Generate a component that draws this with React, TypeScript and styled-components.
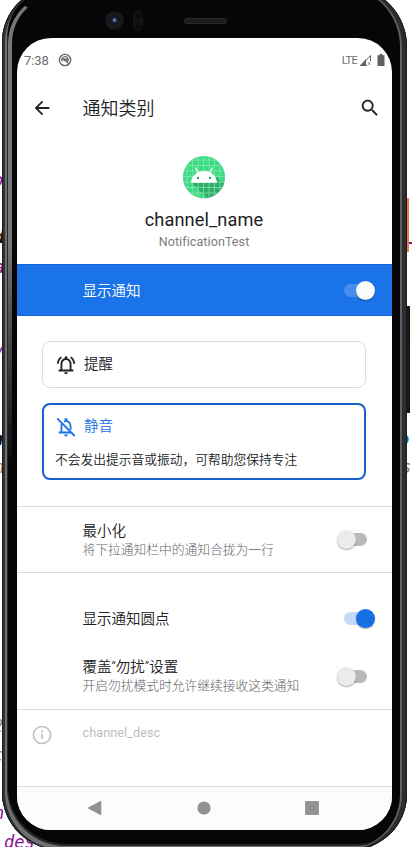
import React from 'react';
import styled, { createGlobalStyle, css } from 'styled-components';

const GlobalStyle = createGlobalStyle`
  * { box-sizing: border-box; }
  body { margin: 0; background: #fff; overflow: hidden; }
`;

const Desktop = styled.div`
  position: relative;
  width: 412px;
  height: 847px;
  overflow: hidden;
  background: #fff;
  font-family: Roboto, 'Noto Sans CJK SC', sans-serif;
`;

const CodeScrap = styled.span<{ $x: number; $y: number; $color: string; $bold?: boolean }>`
  position: absolute;
  left: ${p => p.$x}px;
  top: ${p => p.$y}px;
  color: ${p => p.$color};
  font: italic ${p => (p.$bold ? 700 : 400)} 17px/20px 'DejaVu Sans Mono', monospace;
  white-space: pre;
`;

const EdgeMark = styled.div<{ $x: number; $y: number; $w: number; $h: number; $color: string }>`
  position: absolute;
  left: ${p => p.$x}px;
  top: ${p => p.$y}px;
  width: ${p => p.$w}px;
  height: ${p => p.$h}px;
  background: ${p => p.$color};
`;

const Phone = styled.div`
  position: relative;
  width: 405px;
  height: 863px;
  margin: -13px 0 0 2px;
  padding: 0 15px;
  border-radius: 55px 58px 56px 58px / 55px 60px 56px 58px;
  overflow: hidden;
  background: #060608;
  box-shadow:
    inset 0 0 0 1px #1d1e20,
    inset -5px 0 0 0 #2c2d2e,
    inset 3px 0 0 0 #313335,
    inset -7px 0 0 0 #5e5f60,
    inset 5px -4px 0 0 #6d6f71,
    inset 6px -6px 0 0 #262729;

  &::after {
    content: '';
    position: absolute;
    inset: 6px 7px 0 6px;
    border-left: 4px solid #767777;
    border-top: 3px solid transparent;
    border-radius: 50px 0 0 0;
    mask-image: linear-gradient(#000 0 250px, transparent 480px);
  }
`;

const Bezel = styled.div`
  display: grid;
  grid-template-columns: 86px 22px 26px 33px 1fr;
  align-items: center;
  height: 51px;
  padding-top: 16px;
`;

const Speaker = styled.div`
  width: 43px;
  height: 6px;
  border: 1px solid #29292b;
  border-radius: 3px;
  background: #1d1d1e;
`;

const Lens = styled.div`
  justify-self: center;
  width: 19px;
  height: 19px;
  border-radius: 50%;
  background: radial-gradient(circle at 50% 48%, #7c84a8 0 0.8px, #222c4c 2px, #10131e 4px, #1b1b1d 6px, #161618 9px);
`;

const Sensor = styled.div`
  justify-self: center;
  width: 10px;
  height: 20px;
  border-radius: 5px;
  background: radial-gradient(circle at 5px 5px, #0c0c0e 3px, transparent 4px),
    radial-gradient(circle at 5px 15px, #0c0c0e 3px, transparent 4px), #131315;
`;

const Screen = styled.main`
  display: flex;
  flex-direction: column;
  height: 792px;
  border-radius: 34px;
  overflow: hidden;
  background: #fff;
  color: #202124;
`;

const StatusBar = styled.div`
  display: flex;
  align-items: center;
  gap: 9.5px;
  height: 44px;
  padding: 0 6px 0 7px;
  color: #6b6c6e;
  font-size: 13px;
  letter-spacing: -0.1px;
`;

const StatusIcons = styled.div`
  display: flex;
  align-items: center;
  gap: 2px;
  margin-left: auto;
  font-size: 11px;
  letter-spacing: -0.7px;
`;

const AppBar = styled.header`
  display: grid;
  grid-template-columns: 50px 15.5px 1fr 24px;
  align-items: center;
  height: 52px;
  padding: 0 10px 0 0;
`;

const BarIcon = styled.svg`
  display: block;
  justify-self: center;
`;

const Title = styled.h1`
  margin: 0;
  padding-top: 2px;
  grid-column: 3;
  font-size: 18px;
  font-weight: 350;
  line-height: 26px;
`;

const Identity = styled.section`
  display: flex;
  flex-direction: column;
  align-items: center;
  height: 130px;
  padding: 21px 1px 0 0;
`;

const ChannelName = styled.div`
  margin-top: 10px;
  font-size: 18.2px;
  line-height: 22px;
  letter-spacing: 0.1px;
`;

const AppName = styled.div`
  margin-top: 2px;
  font-size: 12.5px;
  line-height: 18px;
  letter-spacing: 0.1px;
  color: #7c7c7c;
`;

const MasterSwitch = styled.section`
  display: flex;
  align-items: center;
  justify-content: space-between;
  height: 52px;
  padding: 0 18px 0 65.5px;
  border: solid #1765cf;
  border-width: 1px 0;
  background: #1a73e8;
  color: #fff;
`;

const Track = styled.div<{ $on: boolean; $inverse?: boolean }>`
  position: relative;
  flex: none;
  width: 28px;
  height: 13px;
  margin-right: ${p => (p.$on ? 2 : 7)}px;
  border-radius: 7px;
  background: ${p => (p.$inverse ? '#488fed' : p.$on ? '#c2d9f9' : '#b9b9b9')};

  &::after {
    content: '';
    position: absolute;
    top: -3px;
    ${p => (p.$on ? 'right: -2.5px;' : 'left: -2.5px;')}
    width: 19px;
    height: 19px;
    border-radius: 50%;
    background: ${p => (p.$inverse ? '#fafafa' : p.$on ? '#1570e3' : '#ebebeb')};
    box-shadow: 0 1px 1.5px rgba(0, 0, 0, 0.35);
  }
`;

const Choices = styled.section`
  display: flex;
  flex-direction: column;
  gap: 15px;
  height: 190px;
  padding: 25px 26px 0 25px;
`;

const Choice = styled.div<{ $selected?: boolean }>`
  height: ${p => (p.$selected ? 77 : 47)}px;
  padding: ${p => (p.$selected ? '10px 11px 0' : '11px 12px 0')};
  border: ${p => (p.$selected ? '2px solid #1760cb' : '1px solid #dadce0')};
  border-radius: 8px;
`;

const ChoiceHead = styled.div<{ $selected?: boolean }>`
  display: flex;
  align-items: center;
  gap: 7px;
  height: 23px;
  font-size: 14.5px;
  font-weight: 350;
  line-height: 20px;
  color: ${p => (p.$selected ? '#1a73e8' : '#202124')};
`;

const ChoiceText = styled.div`
  margin-top: 12px;
  font-size: 12.75px;
  font-weight: 350;
  line-height: 19px;
  white-space: nowrap;
`;

const Setting = styled.section<{ $h: number; $top?: number; $bottom?: number }>`
  display: flex;
  align-items: center;
  justify-content: space-between;
  height: ${p => p.$h}px;
  padding: ${p => p.$top ?? 0}px 18px ${p => p.$bottom ?? 0}px 65.5px;

  ${p => p.$top !== undefined && css`border-top: 1px solid #dadada;`}
`;

const SettingTitle = styled.div`
  padding-top: 2px;
  font-size: 14.5px;
  font-weight: 350;
  line-height: 18px;
`;

const SettingText = styled.div`
  font-size: 12.75px;
  font-weight: 300;
  line-height: 18px;
  color: #5f6368;
  white-space: nowrap;
`;

const MasterLabel = styled(SettingTitle)`
  padding-top: 3px;
`;

const Description = styled.section`
  display: grid;
  grid-template-columns: 65.5px 1fr;
  align-items: start;
  flex: 1;
  padding-top: 14px;
  border-top: 1px solid #dadada;
  color: #bdbdbd;
  font-size: 12.6px;
  line-height: 18px;
  letter-spacing: 0.1px;
`;

const InfoIcon = styled.svg`
  margin: 0.5px 0 0 15px;
`;

const NavBar = styled.nav`
  display: grid;
  grid-template-columns: repeat(3, 108px);
  justify-content: center;
  justify-items: center;
  align-items: center;
  height: 44px;
  padding: 0 1px 1px 0;
  border-top: 1px solid #dcdcdc;
  background: #fcfcfc;
`;

function AndroidLogo() {
  const lines = [4, 9.5, 15, 20.5, 26, 31.5, 37];
  return (
    <svg width="44" height="44" viewBox="0 0 44 44">
      <defs>
        <clipPath id="disc"><circle cx="22" cy="22" r="21" /></clipPath>
      </defs>
      <circle cx="22" cy="22.6" r="21" fill="#b7c8be" />
      <g clipPath="url(#disc)">
        <rect width="44" height="44" fill="#3ddc84" />
        <path d="M9 27 30 48 48 44V34L35 22Z" fill="#2fae69" />
        <g stroke="#8beab5" strokeWidth=".7">
          {lines.map(n => <path key={n} d={`M${n + 1} 0V44M0 ${n + 1}H44`} />)}
        </g>
      </g>
      <path d="M9 27.8C9.5 20.5 15 15.9 22 15.9S34.5 20.5 35 27.8Z" fill="#fff" />
      <path d="m16 17.5-2.2-4.4M28 17.5l2.2-4.4" stroke="#fff" strokeWidth="1.3" strokeLinecap="round" />
      <circle cx="16" cy="22.9" r="1.2" fill="#2da464" />
      <circle cx="28" cy="22.9" r="1.2" fill="#2da464" />
    </svg>
  );
}

function BellIcon({ off }: { off?: boolean }) {
  return off ? (
    <svg width="22" height="22" viewBox="0 0 24 24" fill="none" stroke="currentColor" strokeWidth="2">
      <path d="M2.400 2.700 21.500 21.800" />
      <path d="M4 18H17.500M7 18V11C7 10 7.200 9.200 7.600 8.400M10 6.200C13.800 4.400 17 7.200 17 11V15" />
      <path d="M12 2.500V5.500" strokeWidth="3" />
      <path d="M10 20.300h4c0 1.300-.9 2.200-2 2.200s-2-.9-2-2.200z" fill="currentColor" stroke="none" />
    </svg>
  ) : (
    <svg width="22" height="22" viewBox="0 0 24 24" fill="currentColor">
      <path d="M7.580 4.080 6.150 2.650C3.750 4.480 2.170 7.300 2.030 10.500h2c.150-2.650 1.510-4.970 3.550-6.420zM19.970 10.500h2c-.150-3.200-1.730-6.020-4.120-7.850l-1.420 1.430c2.020 1.450 3.390 3.770 3.540 6.420zM18 11c0-3.070-1.640-5.640-4.500-6.320V4c0-.83-.67-1.500-1.500-1.500s-1.500.67-1.500 1.500v.68C7.630 5.360 6 7.920 6 11v6H4v2h16v-2h-2v-6zm-2 6H8v-6c0-2.480 1.510-4.500 4-4.500s4 2.020 4 4.500v6zM12 22c1.100 0 2-.9 2-2h-4c0 1.100.89 2 2 2z" />
    </svg>
  );
}

export default function App() {
  return (
    <Desktop>
      <GlobalStyle />
      <CodeScrap $x={-7} $y={170} $color="#871094">o</CodeScrap>
      <CodeScrap $x={-6} $y={227} $color="#17120b" $bold>d</CodeScrap>
      <CodeScrap $x={-6} $y={257} $color="#871094">a</CodeScrap>
      <CodeScrap $x={-7} $y={341} $color="#871094">v</CodeScrap>
      <CodeScrap $x={-7} $y={429} $color="#17120b" $bold>n</CodeScrap>
      <CodeScrap $x={-6} $y={457} $color="#a4886c">n</CodeScrap>
      <CodeScrap $x={-7} $y={716} $color="#8c8c8c">2</CodeScrap>
      <CodeScrap $x={-7} $y={745} $color="#8c8c8c">c</CodeScrap>
      <CodeScrap $x={-6} $y={803} $color="#871094">n</CodeScrap>
      <CodeScrap $x={4} $y={832} $color="#871094">des</CodeScrap>
      <CodeScrap $x={399} $y={429} $color="#087d88" $bold>o</CodeScrap>
      <CodeScrap $x={401} $y={457} $color="#777">s</CodeScrap>
      <EdgeMark $x={405} $y={198} $w={4} $h={54} $color="#ef7357" />
      <EdgeMark $x={409} $y={242} $w={3} $h={2} $color="#871094" />
      <EdgeMark $x={409} $y={310} $w={3} $h={30} $color="#fffae3" />
      <EdgeMark $x={405} $y={306} $w={5} $h={107} $color="#171819" />
      <EdgeMark $x={406} $y={107} $w={1} $h={1} $color="#555" />
      <Phone>
        <Bezel>
          <span />
          <Lens />
          <Sensor />
          <span />
          <Speaker />
        </Bezel>
        <Screen>
          <StatusBar>
            <span>7:38</span>
            <BarIcon width="14" height="14" viewBox="0 0 14 14" fill="none" stroke="#606163">
              <circle cx="7" cy="7" r="5.700" strokeWidth="1.300" />
              <path d="M4.300 8.500A3.200 3.200 0 1 1 9.700 8.500" strokeWidth="1.100" />
              <path d="M5 6.200 9 6 9.200 9ZM8 8l3 3" strokeWidth="1.200" />
            </BarIcon>
            <StatusIcons>
              LTE
              <svg width="13" height="12" viewBox="0 0 13 12">
                <path d="M2.500 11.500 11.500 1.500V7M1 11.500H8" fill="none" stroke="#606163" />
                <path d="M.5 12 7 5V12Z" fill="#606163" />
                <path d="m8.500 8 3 3M11.500 8 8.500 11" stroke="#707173" strokeWidth=".8" />
              </svg>
              <svg width="12" height="12" viewBox="0 0 12 12">
                <path d="M3.500 1.200h2V0h3v1.200h2V12H3.500Z" fill="#606163" />
              </svg>
            </StatusIcons>
          </StatusBar>
          <AppBar>
            <BarIcon width="22" height="22" viewBox="0 0 24 24" fill="#202124">
              <path d="M20 11H7.830l5.590-5.590L12 4l-8 8 8 8 1.410-1.410L7.830 13H20v-2z" />
            </BarIcon>
            <Title>通知类别</Title>
            <BarIcon width="22" height="22" viewBox="0 0 24 24" fill="#202124">
              <path d="M15.500 14h-.79l-.28-.27C15.410 12.590 16 11.110 16 9.500 16 5.910 13.090 3 9.500 3S3 5.910 3 9.500 5.910 16 9.500 16c1.610 0 3.090-.59 4.230-1.570l.27.28v.79l5 4.990L20.490 19l-4.990-5zm-6 0C7.010 14 5 11.990 5 9.500S7.010 5 9.500 5 14 7.010 14 9.500 11.990 14 9.500 14z" />
            </BarIcon>
          </AppBar>
          <Identity>
            <AndroidLogo />
            <ChannelName>channel_name</ChannelName>
            <AppName>NotificationTest</AppName>
          </Identity>
          <MasterSwitch>
            <MasterLabel>显示通知</MasterLabel>
            <Track $on $inverse />
          </MasterSwitch>
          <Choices>
            <Choice>
              <ChoiceHead><BellIcon />提醒</ChoiceHead>
            </Choice>
            <Choice $selected>
              <ChoiceHead $selected><BellIcon off />静音</ChoiceHead>
              <ChoiceText>不会发出提示音或振动，可帮助您保持专注</ChoiceText>
            </Choice>
          </Choices>
          <Setting $h={66} $top={1} $bottom={1}>
            <div>
              <SettingTitle>最小化</SettingTitle>
              <SettingText>将下拉通知栏中的通知合拢为一行</SettingText>
            </div>
            <Track $on={false} />
          </Setting>
          <Setting $h={80} $top={12}>
            <SettingTitle>显示通知圆点</SettingTitle>
            <Track $on />
          </Setting>
          <Setting $h={57} $bottom={9}>
            <div>
              <SettingTitle>覆盖“勿扰”设置</SettingTitle>
              <SettingText>开启勿扰模式时允许继续接收这类通知</SettingText>
            </div>
            <Track $on={false} />
          </Setting>
          <Description>
            <InfoIcon width="20" height="20" viewBox="0 0 20 20" fill="none" stroke="#bdbdbd">
              <circle cx="10" cy="10" r="8.600" strokeWidth="1.500" />
              <path d="M10 9v5M10 5.500v1.700" strokeWidth="1.700" />
            </InfoIcon>
            <span>channel_desc</span>
          </Description>
          <NavBar>
            <svg width="16" height="16"><path d="M0 8 13 1V15Z" fill="#929292" stroke="#858585" strokeWidth=".5" /></svg>
            <svg width="14" height="14"><circle cx="7" cy="7" r="6.600" fill="#929292" /></svg>
            <svg width="14" height="14"><rect x=".5" y=".5" width="13" height="13" rx=".5" fill="#929292" stroke="#858585" strokeWidth=".7" /></svg>
          </NavBar>
        </Screen>
      </Phone>
    </Desktop>
  );
}
